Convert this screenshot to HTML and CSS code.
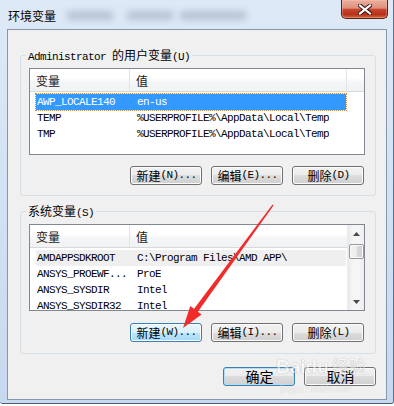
FILE: index.html
```html
<!DOCTYPE html>
<html lang="zh">
<head>
<meta charset="utf-8">
<title>环境变量</title>
<link rel="stylesheet" href="styles.css">
</head>
<body>
<div class="window">
  <div class="titlebar">
    <span class="title">环境变量</span>
    <span class="blur"><i class="b1"></i><i class="b2"></i><i class="b3"></i></span>
    <div class="close">
      <svg width="14" height="11" viewBox="0 0 14 11"><path d="M2 1.5 L12 9.5 M12 1.5 L2 9.5" stroke="#3b1610" stroke-width="4.2" stroke-linecap="square" fill="none"/><path d="M2 1.5 L12 9.5 M12 1.5 L2 9.5" stroke="#ffffff" stroke-width="2.2" stroke-linecap="square" fill="none"/></svg>
    </div>
  </div>
  <div class="client">
    <fieldset class="group">
      <legend>Administrator <span class="c">的用户变量</span>(U)</legend>
      <div class="list">
        <div class="lhead">
          <div class="h1"><span class="c">变量</span></div>
          <div class="h2"><span class="c">值</span></div>
          <div class="h3"></div>
        </div>
        <div class="rows">
          <div class="row sel"><span class="k">AWP_LOCALE140</span><span class="v">en-us</span></div>
          <div class="row"><span class="k">TEMP</span><span class="v">%USERPROFILE%\AppData\Local\Temp</span></div>
          <div class="row"><span class="k">TMP</span><span class="v">%USERPROFILE%\AppData\Local\Temp</span></div>
        </div>
      </div>
      <div class="btns">
        <div class="btn"><span class="c">新建</span>(N)...</div>
        <div class="btn"><span class="c">编辑</span>(E)...</div>
        <div class="btn"><span class="c">删除</span>(D)</div>
      </div>
    </fieldset>
    <fieldset class="group g2">
      <legend><span class="c">系统变量</span>(S)</legend>
      <div class="list l2">
        <div class="lmain">
          <div class="lhead">
            <div class="h1"><span class="c">变量</span></div>
            <div class="h2"><span class="c">值</span></div>
          </div>
          <div class="rows">
            <div class="row hl"><span class="k">AMDAPPSDKROOT</span><span class="v">C:\Program Files\AMD APP\</span></div>
            <div class="row"><span class="k">ANSYS_PROEWF...</span><span class="v">ProE</span></div>
            <div class="row"><span class="k">ANSYS_SYSDIR</span><span class="v">Intel</span></div>
            <div class="row"><span class="k">ANSYS_SYSDIR32</span><span class="v">Intel</span></div>
          </div>
        </div>
        <div class="vscroll">
          <div class="sb-btn"><svg width="7" height="4" viewBox="0 0 7 4"><polygon points="3.5,0 7,4 0,4" fill="#4a4a4a"/></svg></div>
          <div class="thumb"></div>
          <div class="spacer"></div>
          <div class="sb-btn"><svg width="7" height="4" viewBox="0 0 7 4"><polygon points="0,0 7,0 3.5,4" fill="#4a4a4a"/></svg></div>
        </div>
      </div>
      <div class="btns">
        <div class="btn focus"><span class="c">新建</span>(W)...</div>
        <div class="btn"><span class="c">编辑</span>(I)...</div>
        <div class="btn"><span class="c">删除</span>(L)</div>
      </div>
    </fieldset>
    <div class="dlg-btns">
      <div class="btn def"><span class="c big">确定</span></div>
      <div class="btn"><span class="c big">取消</span></div>
    </div>
  </div>
</div>
<div class="wm">
  <div class="wm-main"><span class="wm-lat">Bai</span><span class="wm-lat">du</span><span class="wm-cn">经验</span></div>
  <div class="wm-url">jingyan.baidu.com</div>
</div>
<svg class="arrow" width="394" height="406" viewBox="0 0 394 406">
  <polygon points="273.5,205.4 272.5,204.6 192.8,310.4 196.8,313.3" fill="#f22a2a"/>
  <polygon points="201.6,314.4 190.3,306.1 183,328" fill="#f22a2a"/>
</svg>
</body>
</html>
```
FILE: styles.css
```css
* { box-sizing: border-box; }
html, body { margin: 0; }
body {
  width: 394px;
  height: 406px;
  overflow: hidden;
  position: relative;
  background: #ffffff;
  font-family: "Liberation Mono", "Noto Sans CJK SC", monospace;
  font-size: 11px;
  letter-spacing: -0.6px;
  line-height: 16px;
  color: #000;
}
.c {
  font-family: "Noto Sans CJK SC", "Noto Sans", sans-serif;
  font-size: 12px;
  letter-spacing: 0;
}
.window {
  width: 394px;
  height: 404px;
  padding: 0 6px 3px 7px;
  border-right: 1px solid #5f7088;
  border-bottom: 1px solid #4d5d73;
  border-bottom-left-radius: 3px;
  border-bottom-right-radius: 3px;
  background: linear-gradient(180deg, #dde9f6 0%, #d4e3f4 40%, #c7d9ef 100%);
  display: flex;
  flex-direction: column;
}
.titlebar {
  height: 29px;
  flex: none;
  display: flex;
  align-items: flex-start;
}
.title {
  margin: 7px 0 0 1px;
  font-family: "Noto Sans CJK SC", sans-serif;
  font-size: 12px;
  line-height: 17px;
  letter-spacing: 0;
  color: #000;
}
.blur {
  display: flex;
  margin: 11px 0 0 11px;
  filter: blur(3.5px);
  opacity: 0.4;
}
.blur i { display: block; height: 9px; background: #7a889e; }
.blur .b1 { width: 46px; }
.blur .b2 { width: 46px; margin-left: 14px; }
.blur .b3 { width: 66px; margin-left: 7px; }
.close {
  margin-left: auto;
  margin-right: -1px;
  width: 47px;
  height: 19px;
  border: 1px solid #5a2119;
  border-top: none;
  border-radius: 0 0 5px 5px;
  background: linear-gradient(180deg, #ebb0a0 0%, #de907c 45%, #c8462f 52%, #b8311a 80%, #d2663f 100%);
  box-shadow: inset 0 0 0 1px rgba(255, 200, 180, 0.35);
  display: flex;
  align-items: center;
  justify-content: center;
}
.close svg { display: block; margin-top: 1px; }
.client {
  height: 371px;
  flex: none;
  border: 1px solid #8797ab;
  background: #f0f0f0;
  padding: 18px 10px 0 12px;
  display: flex;
  flex-direction: column;
}
.group {
  margin: 0;
  min-width: 0;
  border: 1px solid #d5dfe5;
  border-radius: 3px;
  padding: 6px 10px 10px 8px;
}
.group.g2 { margin-top: 8px; padding-bottom: 11px; }
.group legend {
  margin-left: -3px;
  padding: 0 2px;
  height: 14px;
  line-height: 14px;
  white-space: nowrap;
  color: #000;
}
.group legend .c { line-height: 14px; }
.list {
  height: 87px;
  border: 1px solid #828790;
  background: #fff;
  overflow: hidden;
}
.list.l2 { display: flex; }
.lmain { flex: 1; min-width: 0; }
.lhead {
  height: 23px;
  display: flex;
  border-bottom: 1px solid #d8d8d8;
  background: linear-gradient(180deg, #ffffff 0%, #ffffff 40%, #f4f5f7 60%, #f1f2f4 100%);
}
.lhead > div {
  display: flex;
  align-items: center;
  padding-top: 2px;
  border-right: 1px solid #e2e3e6;
  color: #1a1a1a;
}
.lhead .c { line-height: 16px; }
.h1 { width: 100px; padding-left: 6px; }
.h2 { width: 217px; padding-left: 6px; }
.h3 { flex: 1; border-right: none !important; }
.l2 .h2 { flex: 1; width: auto; border-right: none !important; }
.rows { padding-top: 2px; }
.row {
  margin-left: 6px;
  width: 310px;
  height: 16px;
  display: flex;
  white-space: nowrap;
}
.k { width: 100px; flex: none; padding-left: 1px; overflow: hidden; }
.v { padding-left: 1px; overflow: hidden; }
.row.sel {
  background: #3399ff;
  color: #fff;
  outline: 1px dotted #d98c3a;
}
.row.hl { background: #efefef; }
.vscroll {
  width: 17px;
  flex: none;
  display: flex;
  flex-direction: column;
  align-items: center;
  border-left: 1px solid #ececec;
  background: linear-gradient(90deg, #e9e9e9 0%, #f5f5f5 30%, #f5f5f5 70%, #ededed 100%);
}
.sb-btn {
  width: 16px;
  height: 17px;
  flex: none;
  display: flex;
  align-items: center;
  justify-content: center;
}
.sb-btn svg { display: block; }
.thumb {
  width: 15px;
  height: 15px;
  margin-top: 2px;
  flex: none;
  border: 1px solid #979797;
  border-radius: 2px;
  background: linear-gradient(90deg, #f4f4f4 0%, #ebebeb 50%, #d9d9d9 50%, #d0d0d0 100%);
  box-shadow: inset 0 0 0 1px #fbfbfb;
}
.spacer { flex: 1; }
.btns {
  display: flex;
  justify-content: flex-end;
  gap: 9px;
  padding-right: 1px;
  margin-top: 11px;
}
.g2 .btns { margin-top: 12px; }
.btn {
  width: 72px;
  height: 19px;
  flex: none;
  border: 1px solid #707070;
  border-radius: 3px;
  background: linear-gradient(180deg, #f2f2f2 0%, #ebebeb 50%, #dddddd 50%, #cfcfcf 100%);
  box-shadow: inset 0 0 0 1px #fcfcfc;
  display: flex;
  align-items: center;
  justify-content: center;
  white-space: nowrap;
  line-height: 15px;
  padding-left: 1px;
}
.btn .c { line-height: 15px; }
.btn.focus {
  border-color: #3c7fb1;
  background: linear-gradient(180deg, #eaf6fd 0%, #d9f0fc 50%, #bee6fd 50%, #a7d9f5 100%);
}
.btn.def {
  border-color: #3c7fb1;
  box-shadow: inset 0 0 0 1px #b4def5;
}
.btn .big { font-size: 14px; }
.dlg-btns {
  display: flex;
  justify-content: flex-end;
  gap: 9px;
  margin-top: 13px;
}
.wm {
  position: absolute;
  left: 276px;
  top: 358px;
  pointer-events: none;
  opacity: 0.5;
}
.wm-main { display: flex; align-items: baseline; height: 26px; }
.wm-lat {
  font-family: "Liberation Sans", sans-serif;
  font-weight: bold;
  font-size: 19px;
  letter-spacing: 0;
  color: #ffffff;
  text-shadow: 0 0 1px #808080, 0 0 1px #808080;
}
.wm-cn {
  margin-left: 3px;
  font-family: "Noto Sans CJK SC", sans-serif;
  font-size: 17px;
  letter-spacing: 0;
  color: #ffffff;
  text-shadow: 0 0 1px #808080, 0 0 1px #808080;
}
.wm-url {
  margin-left: 4px;
  font-family: "Liberation Sans", sans-serif;
  font-size: 9px;
  line-height: 10px;
  letter-spacing: 0;
  color: #ffffff;
  text-shadow: 0 0 1px #8a8a8a;
}
.arrow {
  position: absolute;
  left: 0;
  top: 0;
  pointer-events: none;
}
```
